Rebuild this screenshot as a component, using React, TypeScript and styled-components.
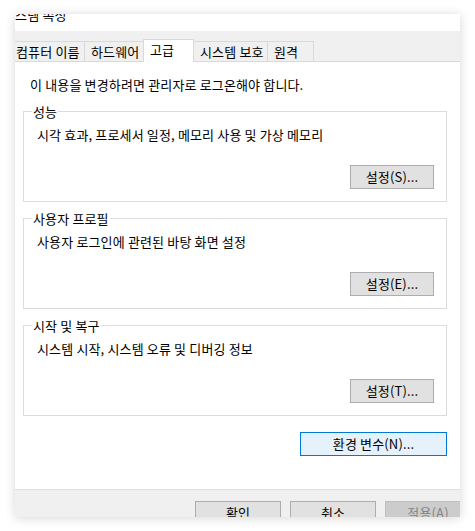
import styled, { createGlobalStyle, css } from "styled-components";

const GlobalStyle = createGlobalStyle`
  html, body {
    margin: 0;
    background-color: #ffffff;
  }
  body {
    font-family: "Noto Sans CJK KR", "Noto Sans", sans-serif;
    font-size: 13px;
    letter-spacing: 0.15px;
    color: #000000;
  }
`;

const Stage = styled.div`
  width: 475px;
  height: 531px;
  padding: 14px 0 0 15px;
  box-sizing: border-box;
  overflow: hidden;
`;

const Frame = styled.div`
  width: 445px;
  height: 503px;
  overflow: hidden;
  background-color: #ffffff;
  box-shadow: 0 1px 10px rgba(0, 0, 0, 0.16);
`;

const Dialog = styled.div`
  width: 451px;
  height: 100%;
  margin-left: -6px;
  display: flex;
  flex-direction: column;
`;

const TitleBar = styled.div`
  height: 17px;
  flex: none;
  overflow: hidden;
  background-color: #ffffff;
`;

const TitleText = styled.div`
  margin: -8px 0 0 -6px;
  line-height: 17px;
  white-space: nowrap;
`;

const TabStrip = styled.div`
  height: 30px;
  flex: none;
  display: flex;
  align-items: flex-end;
  background-color: #f0f0f0;
`;

const Tab = styled.div<{ $width: number; $active?: boolean; $last?: boolean }>`
  position: relative;
  width: ${(p) => p.$width}px;
  height: 20px;
  box-sizing: border-box;
  display: flex;
  align-items: center;
  padding-left: 6px;
  border-top: 1px solid #d9d9d9;
  border-left: 1px solid #d9d9d9;
  border-right: ${(p) => (p.$last ? "1px solid #d9d9d9" : "none")};
  background-color: #f0f0f0;
  line-height: 16px;
  white-space: nowrap;
  ${(p) =>
    p.$active &&
    css`
      z-index: 1;
      height: 23px;
      margin-bottom: -1px;
      padding-bottom: 2px;
      border-right: 1px solid #d9d9d9;
      margin-right: -1px;
      background-color: #ffffff;
    `}
`;

const Panel = styled.div`
  height: 428px;
  flex: none;
  box-sizing: border-box;
  display: flex;
  flex-direction: column;
  padding: 15px 13px 0 14px;
  border-top: 1px solid #d9d9d9;
  background-color: #ffffff;
`;

const Notice = styled.div`
  margin-left: 7px;
  line-height: 16px;
`;

const Groups = styled.div`
  display: flex;
  flex-direction: column;
  gap: 9px;
  margin-top: 11px;
`;

const Group = styled.fieldset`
  margin: 0;
  padding: 8px 12px 12px 13px;
  border: 1px solid #dcdcdc;
  min-width: 0;
`;

const Legend = styled.legend`
  margin-left: -5px;
  padding: 0 1px;
  line-height: 15px;
`;

const GroupBody = styled.div`
  display: flex;
  flex-direction: column;
`;

const Description = styled.div`
  line-height: 16px;
`;

const Button = styled.button<{ $width: number; $variant?: "default" | "focus" | "disabled" }>`
  width: ${(p) => p.$width}px;
  height: 24px;
  padding: 0;
  box-sizing: border-box;
  font-family: inherit;
  font-size: 13px;
  letter-spacing: inherit;
  line-height: 16px;
  color: #000000;
  border: 1px solid #adadad;
  background-color: #e1e1e1;
  ${(p) =>
    p.$variant === "focus" &&
    css`
      border-color: #0078d7;
      background-color: #e5f1fb;
    `}
  ${(p) =>
    p.$variant === "disabled" &&
    css`
      border-color: #bfbfbf;
      background-color: #cccccc;
      color: #838383;
    `}
`;

const GroupButton = styled(Button)`
  align-self: flex-end;
  margin-top: 22px;
`;

const EnvButton = styled(Button)`
  align-self: flex-end;
  margin-top: 16px;
`;

const Footer = styled.div`
  flex: 1;
  display: flex;
  gap: 9px;
  padding: 11px 0 0 186px;
  box-sizing: border-box;
  border-top: 1px solid #dfdfdf;
  background-color: #f0f0f0;
`;

const FooterButton = styled(Button)`
  flex: none;
  height: 23px;
`;

const tabs = [
  { label: "컴퓨터 이름", width: 75 },
  { label: "하드웨어", width: 59 },
  { label: "고급", width: 51, active: true },
  { label: "시스템 보호", width: 74 },
  { label: "원격", width: 47, last: true },
];

const groups = [
  {
    title: "성능",
    text: "시각 효과, 프로세서 일정, 메모리 사용 및 가상 메모리",
    button: "설정(S)...",
  },
  {
    title: "사용자 프로필",
    text: "사용자 로그인에 관련된 바탕 화면 설정",
    button: "설정(E)...",
  },
  {
    title: "시작 및 복구",
    text: "시스템 시작, 시스템 오류 및 디버깅 정보",
    button: "설정(T)...",
  },
];

export default function App() {
  return (
    <>
      <GlobalStyle />
      <Stage>
        <Frame>
          <Dialog>
            <TitleBar>
              <TitleText>시스템 속성</TitleText>
            </TitleBar>

            <TabStrip>
              {tabs.map((t) => (
                <Tab key={t.label} $width={t.width} $active={t.active} $last={t.last}>
                  {t.label}
                </Tab>
              ))}
            </TabStrip>

            <Panel>
              <Notice>이 내용을 변경하려면 관리자로 로그온해야 합니다.</Notice>

              <Groups>
                {groups.map((g) => (
                  <Group key={g.title}>
                    <Legend>{g.title}</Legend>
                    <GroupBody>
                      <Description>{g.text}</Description>
                      <GroupButton $width={84}>{g.button}</GroupButton>
                    </GroupBody>
                  </Group>
                ))}
              </Groups>

              <EnvButton $width={147} $variant="focus">
                환경 변수(N)...
              </EnvButton>
            </Panel>

            <Footer>
              <FooterButton $width={86}>확인</FooterButton>
              <FooterButton $width={86}>취소</FooterButton>
              <FooterButton $width={86} $variant="disabled">
                적용(A)
              </FooterButton>
            </Footer>
          </Dialog>
        </Frame>
      </Stage>
    </>
  );
}
